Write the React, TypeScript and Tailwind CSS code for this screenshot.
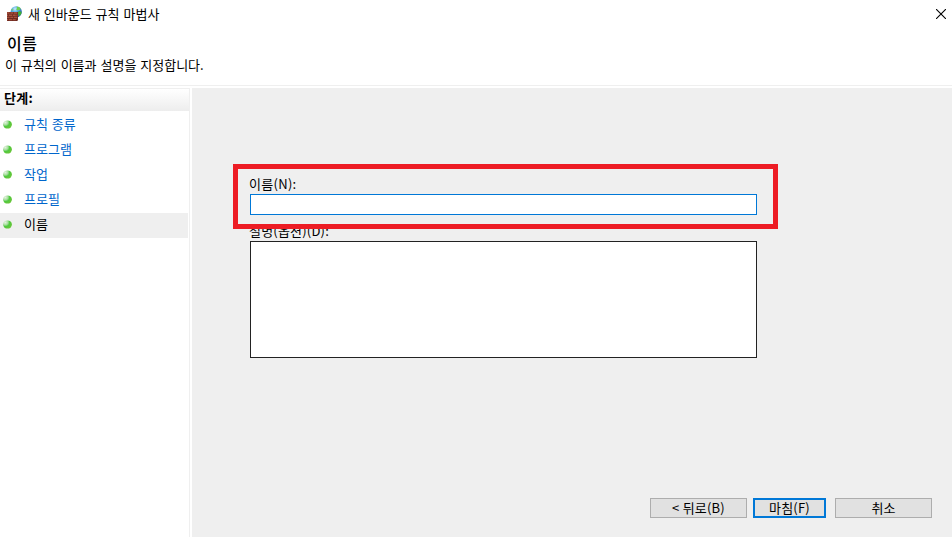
import clsx from "clsx";

const steps = [
  { label: "규칙 종류" },
  { label: "프로그램" },
  { label: "작업" },
  { label: "프로필" },
  { label: "이름", active: true },
];

const FirewallIcon = () => (
  <svg width="16" height="16" viewBox="0 0 16 16" className="shrink-0">
    <defs>
      <radialGradient id="globe" cx="40%" cy="25%" r="80%">
        <stop offset="0" stopColor="#c8ecfb" />
        <stop offset="0.35" stopColor="#58aee6" />
        <stop offset="1" stopColor="#12409e" />
      </radialGradient>
    </defs>
    <circle cx="10.2" cy="5.8" r="5.6" fill="url(#globe)" />
    <path d="M10.6.5c1.8 0 3.2.8 4.1 2.2l-.9 1.5-1.4-.5-1 .9-1.2-1.2.9-1.2z" fill="#6fd04a" />
    <path d="M11.4 6l2-.8 2.2.6c0 1.9-1 3.6-2.6 4.6l-.6-1.9z" fill="#3fae35" />
    <path d="M5.2 3.8l1.6-1.4.6 1.4-1.2 1.3z" fill="#7ccf6a" />
    <path d="M1 6h11v8.2l-1 .9H1z" fill="#6e2a20" />
    <path
      d="M1 6.3h2.6v1.4H1zM4.3 6.3h3v1.4h-3zM8 6.3h3.2v1.4H8zM1 8.5h1.3v1.4H1zM3 8.5h3v1.4H3zM6.7 8.5h3v1.4h-3zM10.4 8.5h1v1.4h-1zM1 10.7h2.6v1.4H1zM4.3 10.7h3v1.4h-3zM8 10.7h3.2v1.4H8zM1 12.9h1.3v1.4H1zM3 12.9h3v1.4H3zM6.7 12.9h3v1.4h-3z"
      fill="#a8503c"
    />
  </svg>
);

const Bullet = () => (
  <svg width="9" height="9" viewBox="0 0 9 9" className="shrink-0">
    <defs>
      <radialGradient id="bullet" cx="25%" cy="25%" r="75%">
        <stop offset="0" stopColor="#e4f3e0" />
        <stop offset="0.4" stopColor="#a5dd9c" />
        <stop offset="0.65" stopColor="#4fc93f" />
        <stop offset="1" stopColor="#66c63a" />
      </radialGradient>
    </defs>
    <ellipse cx="4.5" cy="4.5" rx="4.4" ry="4.1" fill="url(#bullet)" />
  </svg>
);

const App = () => {
  return (
    <div className="flex h-[537px] w-[952px] flex-col overflow-hidden bg-white font-['Noto_Sans_CJK_KR','Noto_Sans',sans-serif] text-[13px] leading-[18px] text-black [word-spacing:1px]">
      {/* Title bar */}
      <header className="flex h-7 shrink-0 items-center justify-between pl-1.5 pr-1.5">
        <div className="flex items-center gap-1.5">
          <FirewallIcon />
          <h1 className="whitespace-nowrap">새 인바운드 규칙 마법사</h1>
        </div>
        <button aria-label="닫기">
          <svg width="10" height="10" viewBox="0 0 10 10" stroke="#000" strokeWidth="1.1">
            <path d="M0 0L10 10M10 0L0 10" />
          </svg>
        </button>
      </header>

      <div className="h-[58px] shrink-0 border-b border-[#efefef]">
        <h2 className="mt-[5px] pl-[7px] text-[16px] font-medium leading-[20px] tracking-[0.5px]">이름</h2>
        <p className="mt-[3px] pl-[5px]">이 규칙의 이름과 설명을 지정합니다.</p>
      </div>

      <div className="mt-0.5 flex flex-1 gap-0.5">
        {/* Steps */}
        <aside className="w-[190px] shrink-0 border-r border-t border-[#efefef]">
          <div className="h-[22px] bg-gradient-to-b from-white to-[#ededed] pl-1 font-bold leading-[18px] tracking-[0.3px]">
            단계:
          </div>
          <ul className="mt-0.5 w-[188px]">
            {steps.map((step) => (
              <li
                key={step.label}
                className={clsx(
                  "flex h-[25px] items-center gap-3 pl-[3px] pb-[3px]",
                  step.active ? "bg-[#efefef] text-black" : "text-[#0066cc]"
                )}
              >
                <Bullet />
                <span>{step.label}</span>
              </li>
            ))}
          </ul>
        </aside>

        <main className="flex flex-1 flex-col bg-[#efefef]">
          <div className="relative ml-[58px] mt-[87px] w-[507px]">
            <label className="-ml-px block h-[19px] leading-[18px] tracking-[0.3px]">이름(N):</label>
            <input className="block h-[21px] w-full border border-[#0078d7] bg-white outline-none" />
            <label className="-ml-px mt-[7px] block h-[19px] leading-[18px] tracking-[0.2px]">설명(옵션)(D):</label>
            <textarea className="block h-[117px] w-full resize-none border border-[#222] bg-white outline-none" />
            {/* Highlight around the name field */}
            <div className="pointer-events-none absolute -left-[17px] -top-[11px] h-[65px] w-[545px] border-[5px] border-[#ed1c24]" />
          </div>

          <div className="mb-[19px] mr-5 mt-auto flex justify-end">
            <button className="h-5 w-[97px] border border-[#adadad] bg-[#e1e1e1] leading-[18px] tracking-[0.2px]">
              &lt; 뒤로(B)
            </button>
            <button className="ml-1.5 h-5 w-[73px] border-2 border-[#0078d7] bg-[#e1e1e1] leading-4 tracking-[0.2px]">
              마침(F)
            </button>
            <button className="ml-[9px] h-5 w-[97px] border border-[#adadad] bg-[#e1e1e1] leading-[18px]">
              취소
            </button>
          </div>
        </main>
      </div>
    </div>
  );
};

export default App;
